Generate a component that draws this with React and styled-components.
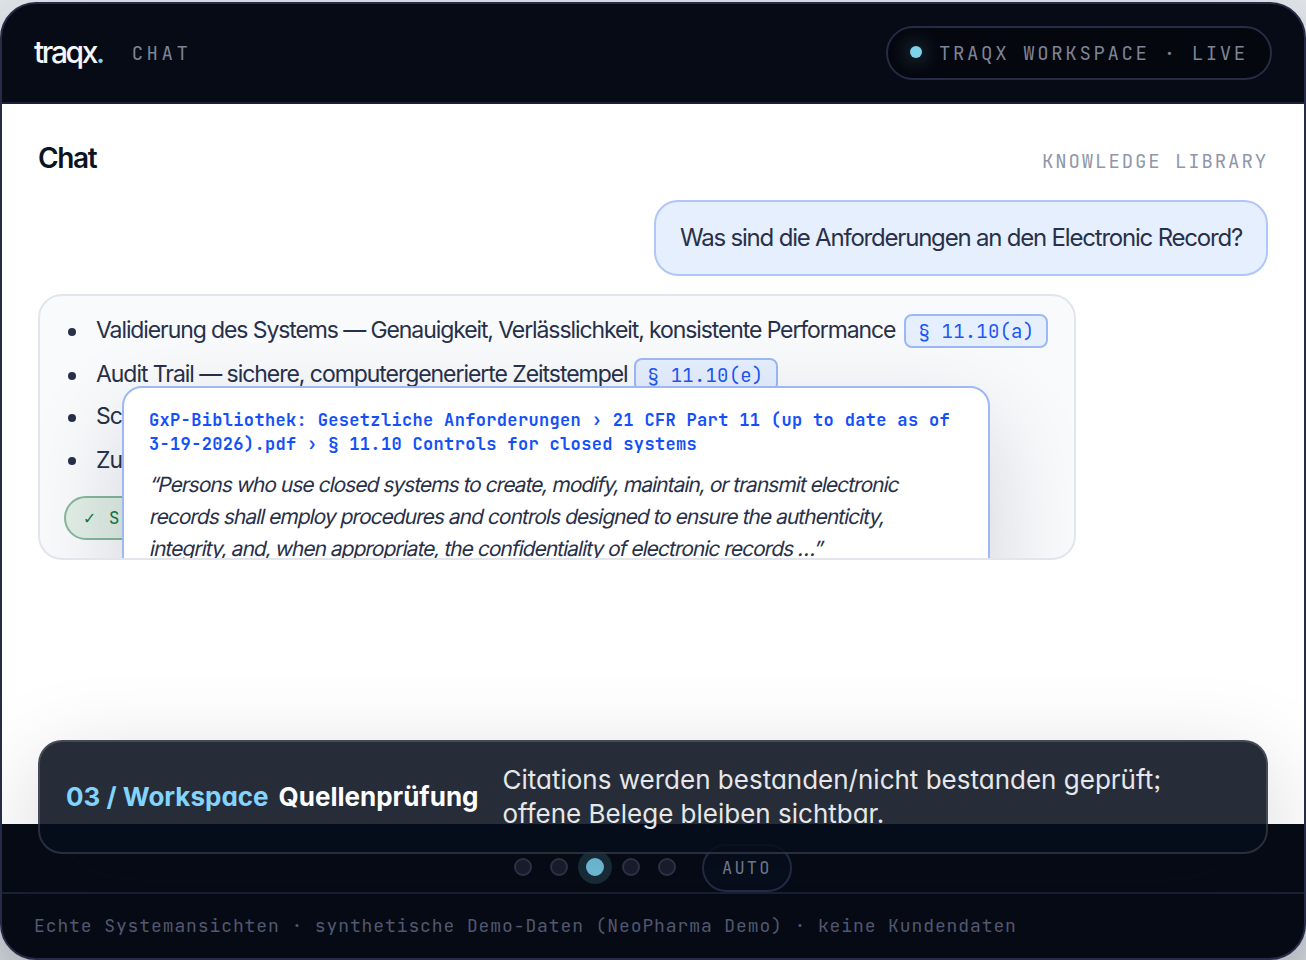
import React, { useState } from 'react';
import styled, { createGlobalStyle } from 'styled-components';

const sans = `Inter, 'Liberation Sans', sans-serif`;
const mono = `'JetBrains Mono', 'DejaVu Sans Mono', monospace`;

const GlobalStyle = createGlobalStyle`
  * {
    box-sizing: border-box;
  }

  body {
    margin: 0;
    overflow: hidden;
    background: #e6ebf0;
    font-family: ${sans};
    -webkit-font-smoothing: antialiased;
  }
`;

const Stage = styled.div`
  height: 960px;
  padding-top: 2px;
  overflow: hidden;
`;

const Frame = styled.div`
  position: relative;
  display: flex;
  flex-direction: column;
  height: 958px;
  border: 2px solid #262c45;
  border-radius: 36px;
  background: #070b15;
  overflow: hidden;
  box-shadow: 0 40px 100px rgba(6, 10, 20, 0.4);
`;

const TopBar = styled.header`
  display: flex;
  align-items: center;
  justify-content: space-between;
  flex: none;
  height: 100px;
  padding: 0 32px;
  border-bottom: 2px solid #191f36;
`;

const Brand = styled.div`
  display: flex;
  align-items: center;
  gap: 29px;
`;

const Logo = styled.span`
  padding-bottom: 2px;
  font-size: 30px;
  line-height: 36px;
  font-weight: 500;
  letter-spacing: -2.4px;
  color: #f4f6fb;

  span {
    color: #7dd3ea;
  }
`;

const Mono = styled.span`
  padding-top: ${(p) => p.$drop || 0}px;
  font-family: ${mono};
  font-size: ${(p) => p.$size}px;
  line-height: 1.3;
  letter-spacing: ${(p) => p.$spacing}px;
  color: ${(p) => p.$color};
  white-space: pre;
`;

const LivePill = styled.div`
  display: flex;
  align-items: center;
  gap: 17px;
  width: 386px;
  height: 54px;
  padding: 0 22px;
  border: 2px solid #262c45;
  border-radius: 27px;
  background: #05070f;
`;

const LiveDot = styled.i`
  flex: none;
  width: 12px;
  height: 12px;
  margin-top: -2px;
  border-radius: 50%;
  background: #7dd3ea;
  box-shadow: 0 0 20px rgba(125, 211, 234, 0.6);
`;

const Body = styled.main`
  flex: none;
  height: 720px;
  padding: 36px;
  background: #fff;
`;

const TitleRow = styled.div`
  display: flex;
  align-items: center;
  justify-content: space-between;
  height: 36px;
  margin-bottom: 24px;
`;

const Title = styled.h1`
  margin: 0;
  font-size: 28px;
  line-height: 36px;
  font-weight: 600;
  letter-spacing: -1.4px;
  color: #0c1424;
`;

const LibraryLabel = styled.div`
  display: flex;
  padding-top: 8px;
`;

const Question = styled.div`
  width: 614px;
  height: 76px;
  margin: 0 0 18px auto;
  padding: 18px 24px;
  border: 2px solid #afc6f6;
  border-radius: 24px;
  background: #e6effe;
  color: #28304a;
  font-size: 24px;
  line-height: 36px;
  letter-spacing: -1.2px;
  white-space: nowrap;
`;

const Answer = styled.section`
  position: relative;
  width: 1038px;
  height: 266px;
  padding: 12px 24px;
  border: 2px solid #e2e5ec;
  border-radius: 24px;
  background: #f8fafc;
  overflow: hidden;
`;

const List = styled.ul`
  margin: 0;
  padding: 0;
  list-style: none;
`;

const Item = styled.li`
  display: flex;
  align-items: center;
  height: ${(p) => p.$height}px;
  color: #28304a;
  font-size: 23px;
  letter-spacing: ${(p) => p.$spacing || -1.05}px;
  white-space: nowrap;

  &::before {
    content: '';
    flex: none;
    width: 8px;
    height: 8px;
    margin: 3px 20px 0 4px;
    border-radius: 50%;
    background: #28304a;
  }
`;

const Citation = styled.span`
  display: flex;
  flex: none;
  align-items: center;
  width: 144px;
  height: 34px;
  margin: 2px 0 0 ${(p) => p.$gap}px;
  padding-left: 12px;
  border: 2px solid #9db9f5;
  border-radius: 8px;
  background: #e6effe;
`;

const StatusPill = styled.div`
  display: flex;
  align-items: center;
  width: 300px;
  height: 44px;
  margin-top: 13px;
  padding-left: 18px;
  border: 2px solid #86b79b;
  border-radius: 22px;
  background: #e1efe7;
`;

const Source = styled.aside`
  position: absolute;
  left: 82px;
  top: 90px;
  width: 868px;
  height: 240px;
  padding: 20px 25px;
  border: 2px solid #9db9f5;
  border-radius: 20px;
  background: #fff;
  box-shadow: 0 36px 96px rgba(16, 18, 34, 0.17);
`;

const SourcePath = styled.div`
  font-family: ${mono};
  font-size: 17px;
  line-height: 24px;
  font-weight: 700;
  letter-spacing: 0.34px;
  color: #1450f8;
  white-space: pre;
`;

const Quote = styled.p`
  margin: 13px 0 0;
  font-size: 21px;
  line-height: 32px;
  letter-spacing: -1px;
  color: #28304a;
`;

/* upright face slanted line by line, keeps the two-storey a */
const QuoteLine = styled.span`
  display: block;
  width: fit-content;
  white-space: nowrap;
  transform: skewX(-12deg);
  transform-origin: 0 70%;
`;

const Stepper = styled.nav`
  display: flex;
  align-items: flex-end;
  justify-content: center;
  flex: none;
  height: 68px;
`;

const Steps = styled.div`
  display: flex;
  gap: 18px;
  margin: 0 26px 16px 0;
`;

const Step = styled.button`
  width: 18px;
  height: 18px;
  padding: 0;
  border: 2px solid ${(p) => (p.$active ? '#78c9e6' : '#333649')};
  border-radius: 50%;
  background: ${(p) => (p.$active ? '#78c9e6' : '#1b1e2e')};
  box-shadow: ${(p) => (p.$active ? '0 0 0 8px #1a2e3a' : 'none')};
`;

const AutoButton = styled.button`
  display: flex;
  align-items: center;
  width: 90px;
  height: 48px;
  padding: 0 0 0 18px;
  border: 2px solid #272d49;
  border-radius: 24px;
  background: #070e1c;
`;

const Footer = styled.footer`
  display: flex;
  align-items: center;
  flex: 1;
  padding: 0 32px;
  border-top: 2px solid #1a2135;
`;

const Caption = styled.div`
  position: absolute;
  left: 36px;
  right: 36px;
  top: 736px;
  display: flex;
  align-items: center;
  gap: 24px;
  height: 114px;
  padding: 0 26px;
  border: 2px solid rgba(255, 255, 255, 0.14);
  border-radius: 24px;
  background: rgba(6, 14, 28, 0.87);
  box-shadow: 0 28px 96px rgba(6, 10, 20, 0.18);
  font-size: 26px;
  line-height: 34px;
  font-feature-settings: 'cv11', 'ss03';
`;

const CaptionHead = styled.strong`
  display: flex;
  gap: 10px;
  font-weight: 700;
  color: #fff;
  white-space: nowrap;

  em {
    font-style: normal;
    color: #82d4ff;
  }
`;

const CaptionText = styled.p`
  margin: 0;
  color: #e6e7e9;
  white-space: pre;
`;

const anforderungen = [
  {
    text: 'Validierung des Systems — Genauigkeit, Verlässlichkeit, konsistente Performance',
    cite: '§ 11.10(a)',
    gap: 9,
    height: 44,
    spacing: -1.1,
  },
  {
    text: 'Audit Trail — sichere, computergenerierte Zeitstempel',
    cite: '§ 11.10(e)',
    gap: 6,
    height: 44,
  },
  { text: 'Schutz der Aufzeichnungen', height: 40 },
  { text: 'Zugriff nur für autorisierte Personen', height: 47 },
];

const quote = [
  '“Persons who use closed systems to create, modify, maintain, or transmit electronic',
  'records shall employ procedures and controls designed to ensure the authenticity,',
  'integrity, and, when appropriate, the confidentiality of electronic records …”',
];

const App = () => {
  const [step, setStep] = useState(2);

  return (
    <>
      <GlobalStyle />
      <Stage>
        <Frame>
          <TopBar>
            <Brand>
              <Logo>
                traqx<span>.</span>
              </Logo>
              <Mono $size={19} $spacing={3.5} $drop={2} $color="#7d8496">CHAT</Mono>
            </Brand>
            <LivePill>
              <LiveDot />
              <Mono $size={19} $spacing={2.64} $drop={2} $color="#7d8496">TRAQX WORKSPACE · LIVE</Mono>
            </LivePill>
          </TopBar>

          <Body>
            <TitleRow>
              <Title>Chat</Title>
              <LibraryLabel>
                <Mono $size={19} $spacing={1.9} $color="#8f96a8">KNOWLEDGE LIBRARY</Mono>
              </LibraryLabel>
            </TitleRow>

            <Question>Was sind die Anforderungen an den Electronic Record?</Question>

            <Answer>
              <List>
                {anforderungen.map((item) => (
                  <Item key={item.text} $height={item.height} $spacing={item.spacing}>
                    {item.text}
                    {item.cite && (
                      <Citation $gap={item.gap}>
                        <Mono $size={19} $spacing={0.19} $drop={2} $color="#1c58f6">{item.cite}</Mono>
                      </Citation>
                    )}
                  </Item>
                ))}
              </List>
              <StatusPill>
                <Mono $size={18} $spacing={1.6} $color="#12783f">✓ Source geprüft</Mono>
              </StatusPill>
              <Source>
                <SourcePath>
                  {'GxP-Bibliothek: Gesetzliche Anforderungen › 21 CFR Part 11 (up to date as of\n3-19-2026).pdf › § 11.10 Controls for closed systems'}
                </SourcePath>
                <Quote>
                  {quote.map((line) => (
                    <QuoteLine key={line}>{line}</QuoteLine>
                  ))}
                </Quote>
              </Source>
            </Answer>
          </Body>

          <Stepper>
            <Steps>
              {[0, 1, 2, 3, 4].map((i) => (
                <Step key={i} $active={i === step} onClick={() => setStep(i)} />
              ))}
            </Steps>
            <AutoButton>
              <Mono $size={17} $spacing={2.2} $color="#7d8496">AUTO</Mono>
            </AutoButton>
          </Stepper>

          <Footer>
            <Mono $size={18} $spacing={0.9} $color="#555b74">
              Echte Systemansichten · synthetische Demo-Daten (NeoPharma Demo) · keine Kundendaten
            </Mono>
          </Footer>

          <Caption>
            <CaptionHead>
              <em>03 / Workspace</em>
              Quellenprüfung
            </CaptionHead>
            <CaptionText>
              {'Citations werden bestanden/nicht bestanden geprüft;\noffene Belege bleiben sichtbar.'}
            </CaptionText>
          </Caption>
        </Frame>
      </Stage>
    </>
  );
};

export default App;
